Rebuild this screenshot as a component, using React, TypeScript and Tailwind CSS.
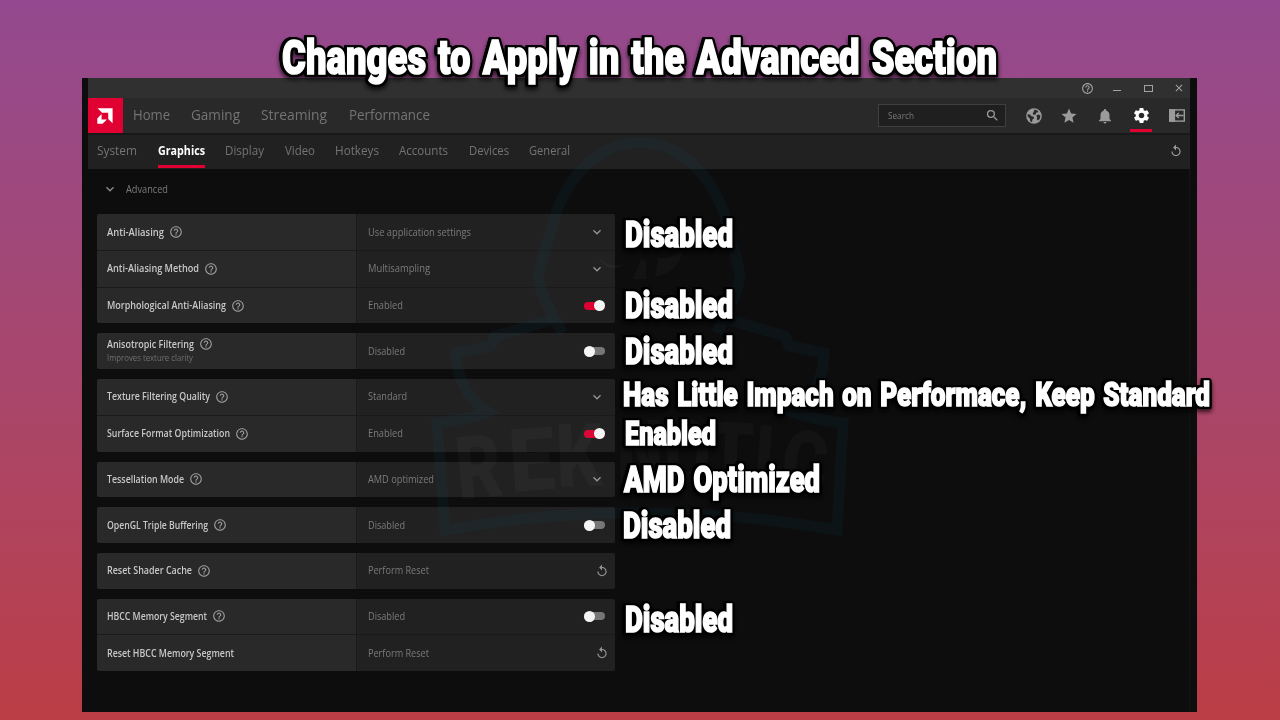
import { useLayoutEffect, useRef, useState } from "react";
import type { ReactNode } from "react";
import {
  MdClose,
  MdExpandMore,
  MdHelpOutline,
  MdNotifications,
  MdReplay,
  MdSearch,
  MdSettings,
  MdStar,
} from "react-icons/md";

/* Stretches or squeezes one line of text to the width of its box. */
function Fit({ className, children }: { className: string; children: ReactNode }) {
  const box = useRef<HTMLSpanElement>(null);
  const line = useRef<HTMLSpanElement>(null);
  const [scale, setScale] = useState(1);
  useLayoutEffect(() => {
    if (box.current && line.current) {
      setScale(box.current.offsetWidth / line.current.getBoundingClientRect().width);
    }
  }, []);
  return (
    <span ref={box} className={`block shrink-0 whitespace-nowrap ${className}`}>
      <span ref={line} className="inline-block origin-left" style={{ transform: `scaleX(${scale})` }}>
        {children}
      </span>
    </span>
  );
}

type Kind = "select" | "on" | "off" | "reset";
type Row = { label: string; w: string; value: string; vw: string; kind: Kind; help?: boolean; sub?: string };

const groups: Row[][] = [
  [
    { label: "Anti-Aliasing", w: "w-[57px]", value: "Use application settings", vw: "w-[103px]", kind: "select", help: true },
    { label: "Anti-Aliasing Method", w: "w-[92px]", value: "Multisampling", vw: "w-[62px]", kind: "select", help: true },
    { label: "Morphological Anti-Aliasing", w: "w-[119px]", value: "Enabled", vw: "w-[35px]", kind: "on", help: true },
  ],
  [
    { label: "Anisotropic Filtering", w: "w-[87px]", value: "Disabled", vw: "w-[37px]", kind: "off", help: true, sub: "Improves texture clarity" },
  ],
  [
    { label: "Texture Filtering Quality", w: "w-[103px]", value: "Standard", vw: "w-[39px]", kind: "select", help: true },
    { label: "Surface Format Optimization", w: "w-[123px]", value: "Enabled", vw: "w-[35px]", kind: "on", help: true },
  ],
  [{ label: "Tessellation Mode", w: "w-[77px]", value: "AMD optimized", vw: "w-[66px]", kind: "select", help: true }],
  [{ label: "OpenGL Triple Buffering", w: "w-[101px]", value: "Disabled", vw: "w-[37px]", kind: "off", help: true }],
  [{ label: "Reset Shader Cache", w: "w-[85px]", value: "Perform Reset", vw: "w-[61px]", kind: "reset", help: true }],
  [
    { label: "HBCC Memory Segment", w: "w-[100px]", value: "Disabled", vw: "w-[37px]", kind: "off", help: true },
    { label: "Reset HBCC Memory Segment", w: "w-[127px]", value: "Perform Reset", vw: "w-[61px]", kind: "reset" },
  ],
];

function Control({ kind }: { kind: Kind }) {
  if (kind === "select") return <MdExpandMore className="mr-[10px] size-4 text-[#929292]" />;
  if (kind === "reset") return <MdReplay className="mr-[6px] size-[14px] text-[#929292]" />;
  const on = kind === "on";
  return (
    <span
      className={`mr-[10px] flex h-2 w-[21px] items-center rounded-full ${
        on ? "justify-end bg-[#dd0031]" : "justify-start bg-[#767676]"
      }`}
    >
      <span className="size-[11px] shrink-0 rounded-full bg-[#f5f5f5]" />
    </span>
  );
}

function SettingRow({ row }: { row: Row }) {
  return (
    <div className="flex h-[35.7px] gap-px">
      <div className="flex w-[259px] flex-col justify-center bg-[#292929] pb-px pl-[10px]">
        <div className="flex items-center gap-[5px]">
          <Fit className={`text-[10px] leading-[14px] font-semibold text-[#c8c8c8] ${row.w}`}>{row.label}</Fit>
          {row.help && <MdHelpOutline className="mt-px size-[14px] text-[#9b9b9b]" />}
        </div>
        {row.sub && <Fit className="w-[86px] text-[8.5px] leading-[14px] font-medium text-[#6f6f6f]">{row.sub}</Fit>}
      </div>
      <div className="flex w-[258px] items-center justify-between bg-[#212121] pl-[10.5px]">
        <Fit className={`-mt-px text-[10px] leading-[14px] font-medium text-[#7b7b7b] ${row.vw}`}>{row.value}</Fit>
        <Control kind={row.kind} />
      </div>
    </div>
  );
}

const menu = [
  ["Home", "w-[37px]"],
  ["Gaming", "w-[49px]"],
  ["Streaming", "w-[66px]"],
  ["Performance", "w-[81px]"],
];

const tabs = [
  ["System", "w-[40px]"],
  ["Graphics", "w-[47px]"],
  ["Display", "w-[39px]"],
  ["Video", "w-[30px]"],
  ["Hotkeys", "w-[43.5px]"],
  ["Accounts", "w-[48.5px]"],
  ["Devices", "w-[40px]"],
  ["General", "w-[41px]"],
];

function Logo() {
  return (
    <svg viewBox="0 0 16 16" className="mr-[2px] size-4" fill="#fff">
      <path d="M.6.3H15.6V15.3L11.2 11V4.7H5z" />
      <path d="M4.6 6.1V11.4H9.9L5.6 15.8H.3V10.4z" />
    </svg>
  );
}

function GlobeIcon() {
  return (
    <svg viewBox="0 0 16 16" className="size-4">
      <circle cx="8" cy="8" r="7.8" fill="#9a9a9a" />
      <g fill="#2b2b2b">
        <path d="M8.4 1.5L11.6 2.4L12.4 4.2L10.4 4.6L9.6 6.4L7.4 6.8L6.6 5.6L7.6 4z" />
        <path d="M1.6 6.2L4 6.4L5.6 8.2L7.8 8.8L8 10.4L6.4 11.6L6 14.2L4.2 13.2L3.8 10.6L1.8 8.8z" />
        <path d="M10.2 7.4L12.6 6.6L14.4 7.6L14 10.4L12 12.6L10.8 11.4L11.2 9.6z" />
      </g>
    </svg>
  );
}

function PanelIcon() {
  return (
    <svg viewBox="0 0 16 13" className="h-[13px] w-4" fill="none" stroke="#9a9a9a" strokeWidth="1.4">
      <rect x=".7" y=".9" width="14.6" height="11.2" />
      <path d="M.7.9H5.4V12.1H.7z" fill="#9a9a9a" />
      <path d="M14.5 6.5H7.2M9.8 3.9L7.2 6.5L9.8 9.1" />
    </svg>
  );
}

function Watermark() {
  const letters: [string, number, number, number][] = [
    ["R", 459, 500, -6],
    ["E", 511, 492, -4],
    ["K", 557, 487, -2],
    ["N", 617, 482, 0],
    ["O", 664, 482, 1],
    ["T", 707, 484, 2],
    ["I", 752, 487, 4],
    ["C", 779, 491, 6],
  ];
  return (
    <svg viewBox="0 0 1280 720" className="pointer-events-none absolute inset-0 h-[720px] w-[1280px]">
      <g fill="none" stroke="#12547a" strokeOpacity=".1" strokeWidth="11">
        <path d="M563 333C548 308 540 292 538 275C545 250 551 230 557 210C573 170 603 143 640 142C677 143 707 170 723 210C729 230 735 250 740 275C738 292 730 308 717 333" />
        <path d="M551 320L495 336L491 346L456 353C456 375 467 400 488 412C474 418 456 420 437 423L445 530C575 507 705 507 837 530L843 423C825 421 809 418 793 412C814 400 824 375 824 353L789 346L785 336L729 320" />
      </g>
      <g fill="#fff" fillOpacity=".028">
        <path d="M598 256C605 266 616 267 625 263C615 273 602 267 598 256zM641 259L633 279H646V261zM658 258C670 259 679 254 683 247C682 263 672 273 655 277z" />
        {letters.map(([c, x, y, r]) => (
          <text key={x} x={x} y={y} transform={`rotate(${r} ${x} ${y})`} fontSize="88" fontWeight="900" fontFamily="Roboto, sans-serif" textLength={c === "I" ? 20 : 46} lengthAdjust="spacingAndGlyphs">
            {c}
          </text>
        ))}
      </g>
    </svg>
  );
}

const notes = [
  ["Changes to Apply in the Advanced Section", "left-[282px] top-[33px] w-[715px] text-[49px]"],
  ["Disabled", "left-[625px] top-[216px] w-[108px] text-[37px]"],
  ["Disabled", "left-[625px] top-[287px] w-[108px] text-[37px]"],
  ["Disabled", "left-[625px] top-[333px] w-[108px] text-[37px]"],
  ["Has Little Impach on Performace, Keep Standard", "left-[623px] top-[377px] w-[587px] text-[34px]"],
  ["Enabled", "left-[625px] top-[417px] w-[91px] text-[33px]"],
  ["AMD Optimized", "left-[624px] top-[461px] w-[196px] text-[37px]"],
  ["Disabled", "left-[623px] top-[507px] w-[108px] text-[37px]"],
  ["Disabled", "left-[625px] top-[601px] w-[108px] text-[37px]"],
];

export default function App() {
  return (
    <div className="relative h-[720px] w-[1280px] overflow-hidden bg-linear-to-b from-[#93498f] to-[#bb3d45] pt-[78px] pl-[82px] font-['Open_Sans',sans-serif]">
      <div className="flex h-[634px] w-[1115px] flex-col bg-[#0d0d0d] pr-[7px] pl-[6px]">
        <div className="flex h-5 shrink-0 items-center justify-end bg-[#303030] pr-[5px] text-[#a2a2a2]">
          <MdHelpOutline className="mr-[19px] size-[13px]" />
          <span className="mt-[5px] mr-[23px] h-[1.5px] w-2 bg-[#a2a2a2]" />
          <span className="mr-[20px] h-[7px] w-[9px] border-[1.5px] border-[#a2a2a2]" />
          <MdClose className="size-3" />
        </div>

        <header className="flex h-[35px] shrink-0 items-center bg-[#292929]">
          <div className="flex size-[35px] items-center justify-center bg-[#e00031]">
            <Logo />
          </div>
          <nav className="ml-[10px] flex flex-1 gap-[21.2px] pb-px text-[14.5px] leading-5 font-medium text-[#747474]">
            {menu.map(([t, w]) => (
              <Fit key={t} className={w}>
                {t}
              </Fit>
            ))}
          </nav>
          <div className="flex h-[23px] w-[128px] items-center justify-between border border-[#3f3f3f] bg-[#1f1f1f] pr-[5px] pl-[9px]">
            <Fit className="w-[26px] text-[9.5px] leading-3 font-medium text-[#7a7a7a]">Search</Fit>
            <MdSearch className="size-[15px] text-[#9a9a9a]" />
          </div>
          <div className="ml-[20px] flex h-full items-center gap-[18px] pr-[5px] text-[#9a9a9a]">
            <GlobeIcon />
            <MdStar className="size-[18px]" />
            <MdNotifications className="size-[18px]" />
            <div className="-ml-[2px] -mr-px flex h-full w-[22px] flex-col items-center justify-end">
              <MdSettings className="mb-[4px] size-[19px] text-white" />
              <span className="mb-px h-[3px] w-full bg-[#e00031]" />
            </div>
            <PanelIcon />
          </div>
        </header>

        <div className="flex h-[36px] shrink-0 items-stretch border-t-2 border-[#191919] bg-[#212121] pr-[7px] pl-[9px]">
          <div className="flex flex-1 gap-[20.6px] pb-px text-[12px] leading-[31px] font-medium text-[#747474]">
            {tabs.map(([t, w]) =>
              t === "Graphics" ? (
                <div key={t} className="relative font-bold text-white">
                  <Fit className={w}>{t}</Fit>
                  <span className="absolute inset-x-0 bottom-0 h-[3px] bg-[#e00031]" />
                </div>
              ) : (
                <Fit key={t} className={w}>
                  {t}
                </Fit>
              ),
            )}
          </div>
          <MdReplay className="mt-[9px] size-[14px] text-[#9a9a9a]" />
        </div>

        <main className="flex-1 border-r border-[#141414] pl-[9px]">
          <div className="flex h-[40px] items-center gap-2 pl-[5px]">
            <MdExpandMore className="size-4 text-[#8c8c8c]" />
            <Fit className="-mt-px w-[42px] text-[10px] leading-[14px] font-medium text-[#7c7c7c]">Advanced</Fit>
          </div>
          <div className="flex w-[518px] flex-col gap-[10px] pt-[5.4px]">
            {groups.map((rows) => (
              <section key={rows[0].label} className="flex flex-col gap-px overflow-hidden rounded-[2px] bg-[#1a1a1a]">
                {rows.map((row) => (
                  <SettingRow key={row.label} row={row} />
                ))}
              </section>
            ))}
          </div>
        </main>
      </div>

      <Watermark />

      {notes.map(([t, c]) => (
        <Fit
          key={c}
          className={`absolute font-['Roboto',sans-serif] leading-none font-black text-white [word-spacing:0.08em] [-webkit-text-stroke:1.6px_#fff] [filter:drop-shadow(1.5px_0_0_#000)_drop-shadow(-1.5px_0_0_#000)_drop-shadow(0_1.5px_0_#000)_drop-shadow(0_-1.5px_0_#000)_drop-shadow(1px_1px_0_#000)_drop-shadow(-1px_0_0_#000)_drop-shadow(0_3px_2px_rgba(0,0,0,0.7))] ${c}`}
        >
          {t}
        </Fit>
      ))}
    </div>
  );
}
